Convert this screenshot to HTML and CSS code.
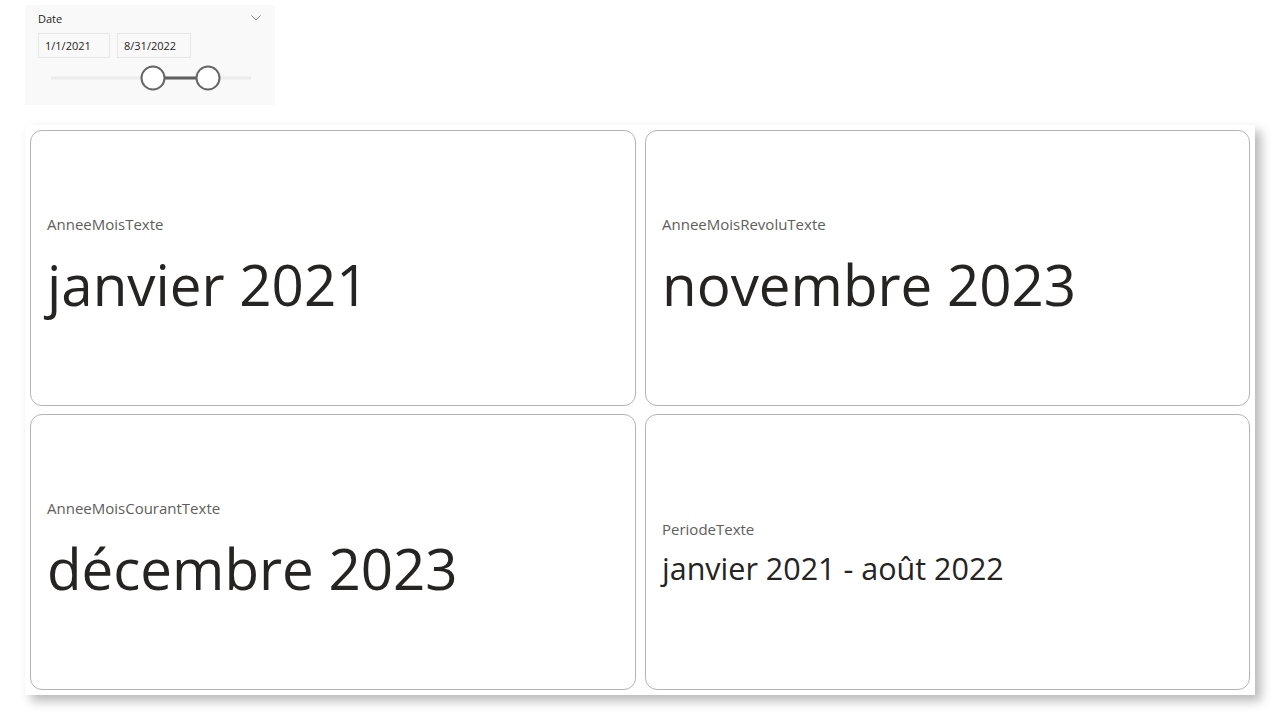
FILE: index.html
```html
<!DOCTYPE html>
<html>
<head>
<meta charset="utf-8">
<link rel="stylesheet" href="styles.css">
</head>
<body>
<div class="page">
  <div class="slicer">
    <div class="slicer-head">
      <span class="slicer-title">Date</span>
      <svg class="chevron" width="10" height="6" viewBox="0 0 10 6"><path d="M0.5 0.5 L5 5 L9.5 0.5" fill="none" stroke="#8a8a8a" stroke-width="1"/></svg>
    </div>
    <div class="slicer-inputs">
      <div class="date-box">1/1/2021</div>
      <div class="date-box">8/31/2022</div>
    </div>
    <div class="slider">
      <svg width="200" height="28" viewBox="0 0 200 28">
        <line x1="0" y1="14" x2="200" y2="14" stroke="#ececec" stroke-width="3"/>
        <line x1="102" y1="14" x2="157" y2="14" stroke="#5f5f5f" stroke-width="3"/>
        <circle cx="102" cy="14" r="11.5" fill="#fff" stroke="#666" stroke-width="2"/>
        <circle cx="157" cy="14" r="11.5" fill="#fff" stroke="#666" stroke-width="2"/>
      </svg>
    </div>
  </div>

  <div class="cards">
    <div class="card">
      <div class="card-label">AnneeMoisTexte</div>
      <div class="card-value">janvier 2021</div>
    </div>
    <div class="card">
      <div class="card-label">AnneeMoisRevoluTexte</div>
      <div class="card-value">novembre 2023</div>
    </div>
    <div class="card">
      <div class="card-label">AnneeMoisCourantTexte</div>
      <div class="card-value">décembre 2023</div>
    </div>
    <div class="card">
      <div class="card-label">PeriodeTexte</div>
      <div class="card-value small">janvier 2021 - août 2022</div>
    </div>
  </div>
</div>
</body>
</html>
```

FILE: styles.css
```css
* { box-sizing: border-box; }
html, body { margin: 0; padding: 0; background: #fff; }
body { font-family: "Open Sans", "Noto Sans", sans-serif; color: #252423; }

.page {
  padding: 5px 25px 0 25px;
  width: 1280px;
  height: 720px;
}

.slicer {
  width: 250px;
  height: 100px;
  background: #f9f9f9;
  padding: 6px 13px 0 13px;
}
.slicer-head {
  display: flex;
  justify-content: space-between;
  align-items: center;
  height: 15px;
}
.slicer-title { font-size: 11px; color: #252423; }
.chevron { margin-right: 1px; margin-top: -2px; }
.slicer-inputs {
  display: flex;
  gap: 7px;
  margin-top: 7px;
}
.date-box {
  height: 25px;
  border: 1px solid #e6e6e6;
  background: #f9f9f9;
  font-size: 11px;
  line-height: 23px;
  padding-left: 6px;
  color: #252423;
}
.date-box:first-child { width: 72px; }
.date-box:last-child { width: 74px; }
.slider {
  margin-top: 6px;
  padding-left: 13px;
  height: 28px;
}
.slider svg { display: block; }

.cards {
  margin-top: 20px;
  width: 1230px;
  height: 570px;
  background: #fff;
  padding: 5px;
  box-shadow: 6px 6px 10px rgba(0,0,0,0.28);
  display: grid;
  grid-template-columns: 606px 605px;
  grid-template-rows: 276px 276px;
  column-gap: 9px;
  row-gap: 8px;
}
.card {
  border: 1px solid #b3b3b3;
  border-radius: 12px;
  display: flex;
  flex-direction: column;
  justify-content: center;
  padding-left: 16px;
  padding-top: 6px;
}
.card-label {
  font-size: 15px;
  color: #605e5c;
  line-height: 20px;
}
.card-value {
  font-size: 56.5px;
  line-height: 86px;
  margin-top: 8px;
  color: #252423;
}
.card-value.small {
  font-size: 30.5px;
  line-height: 48px;
  margin-top: 5px;
}
```
